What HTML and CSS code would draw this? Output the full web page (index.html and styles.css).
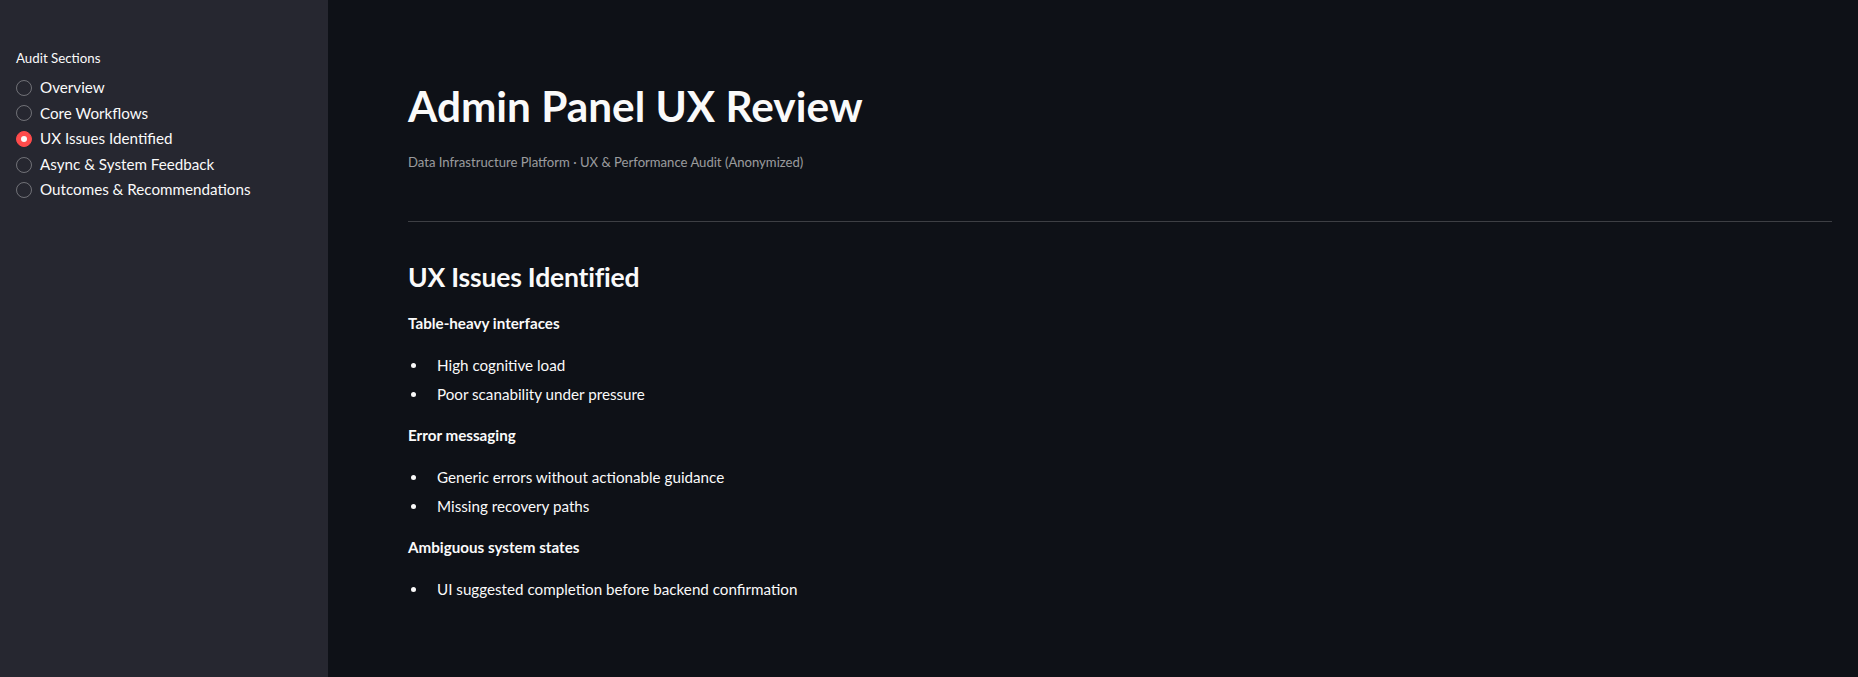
FILE: index.html
```html
<!DOCTYPE html>
<html lang="en">
<head>
<meta charset="utf-8">
<title>Admin Panel UX Review</title>
<link rel="stylesheet" href="styles.css">
</head>
<body>
<div class="app">
  <aside class="sidebar">
    <div class="radio-label">Audit Sections</div>
    <div class="radio-group">
      <label class="radio"><span class="dot"></span><span class="radio-text">Overview</span></label>
      <label class="radio"><span class="dot"></span><span class="radio-text">Core Workflows</span></label>
      <label class="radio checked"><span class="dot"></span><span class="radio-text">UX Issues Identified</span></label>
      <label class="radio"><span class="dot"></span><span class="radio-text">Async &amp; System Feedback</span></label>
      <label class="radio"><span class="dot"></span><span class="radio-text">Outcomes &amp; Recommendations</span></label>
    </div>
  </aside>
  <main class="main">
    <h1 class="title">Admin Panel UX Review</h1>
    <p class="caption">Data Infrastructure Platform · UX &amp; Performance Audit (Anonymized)</p>
    <hr class="divider">
    <h2 class="section-title">UX Issues Identified</h2>
    <p class="strong-p"><strong>Table-heavy interfaces</strong></p>
    <ul class="bullets">
      <li>High cognitive load</li>
      <li>Poor scanability under pressure</li>
    </ul>
    <p class="strong-p"><strong>Error messaging</strong></p>
    <ul class="bullets">
      <li>Generic errors without actionable guidance</li>
      <li>Missing recovery paths</li>
    </ul>
    <p class="strong-p"><strong>Ambiguous system states</strong></p>
    <ul class="bullets">
      <li>UI suggested completion before backend confirmation</li>
    </ul>
  </main>
</div>
</body>
</html>
```

FILE: styles.css
```css
* { box-sizing: border-box; }
html, body {
  margin: 0;
  padding: 0;
  height: 100%;
  background: #0e1117;
}
body {
  font-family: "Lato", "Source Sans Pro", "Noto Sans", sans-serif;
  color: #fafafa;
  font-size: 15.2px;
  line-height: 25.6px;
}
.app {
  display: flex;
  min-height: 100vh;
}
.sidebar {
  width: 328px;
  flex: 0 0 328px;
  background: #262730;
  padding: 48px 16px 0 16px;
}
.radio-label {
  font-size: 13.3px;
  line-height: 20px;
  margin-bottom: 7px;
}
.radio-group {
  display: flex;
  flex-direction: column;
}
.radio {
  display: flex;
  align-items: center;
  height: 25.6px;
  font-size: 15.2px;
}
.dot {
  width: 16px;
  height: 16px;
  border-radius: 50%;
  border: 1px solid rgba(250, 250, 250, 0.35);
  margin-right: 8px;
  flex: 0 0 16px;
  display: flex;
  align-items: center;
  justify-content: center;
}
.radio.checked .dot {
  background: #ff4b4b;
  border-color: #ff4b4b;
}
.radio.checked .dot::after {
  content: "";
  width: 6px;
  height: 6px;
  border-radius: 50%;
  background: #fafafa;
}
.main {
  flex: 1;
  padding: 80px 26px 40px 80px;
}
.title {
  margin: 0;
  font-size: 42.3px;
  line-height: 52.8px;
  font-weight: 700;
}
.caption {
  margin: 18px 0 0 0;
  font-size: 13.1px;
  line-height: 22.4px;
  color: rgba(250, 250, 250, 0.6);
}
.divider {
  margin: 48px 0 0 0;
  border: none;
  height: 1px;
  background: rgba(250, 250, 250, 0.2);
}
.section-title {
  margin: 37px 0 0 0;
  font-size: 26.5px;
  line-height: 36px;
  font-weight: 700;
  letter-spacing: -0.2px;
}
.strong-p {
  margin: 16px 0 16px 0;
}
.strong-p strong { font-weight: 700; }
.bullets {
  list-style: none;
  margin: 0 0 16px 0;
  padding: 0;
}
.bullets li {
  margin: 3.2px 0;
}
.bullets li::before {
  content: "";
  display: inline-block;
  width: 5px;
  height: 5px;
  border-radius: 50%;
  background: #fafafa;
  margin-left: 3px;
  margin-right: 21px;
  vertical-align: 3px;
}
```
